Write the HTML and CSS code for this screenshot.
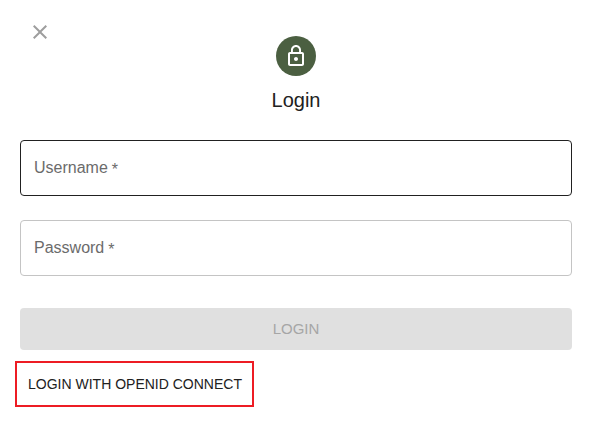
FILE: index.html
```html
<!DOCTYPE html>
<html lang="en">
<head>
<meta charset="utf-8">
<title>Login</title>
<link rel="stylesheet" href="styles.css">
</head>
<body>
<main class="dialog">
  <button class="close" aria-label="Close"><svg viewBox="0 0 24 24"><path d="M19 6.41 17.59 5 12 10.59 6.41 5 5 6.41 10.59 12 5 17.59 6.41 19 12 13.41 17.59 19 19 17.59 13.41 12z"/></svg></button>
  <header class="header">
    <div class="avatar"><svg viewBox="0 0 24 24"><path d="M12 17c1.1 0 2-.9 2-2s-.9-2-2-2-2 .9-2 2 .9 2 2 2zm6-9h-1V6c0-2.76-2.24-5-5-5S7 3.24 7 6v2H6c-1.1 0-2 .9-2 2v10c0 1.1.9 2 2 2h12c1.1 0 2-.9 2-2V10c0-1.1-.9-2-2-2zM8.900 6c0-1.710 1.390-3.100 3.100-3.100s3.100 1.390 3.100 3.100v2H8.900V6zM18 20H6V10h12v10z"/></svg></div>
    <h1 class="title">Login</h1>
  </header>
  <form class="form">
    <label class="field field-active"><span class="label">Username</span><span class="star">*</span></label>
    <label class="field"><span class="label">Password</span><span class="star">*</span></label>
    <button class="submit" type="button" disabled>LOGIN</button>
  </form>
  <button class="openid" type="button"><span class="openid-text">LOGIN WITH OPENID CONNECT</span></button>
</main>
</body>
</html>
```
FILE: styles.css
```css
* { box-sizing: border-box; }
body { margin: 0; background: #fff; font-family: "Liberation Sans", Arial, sans-serif; }
button { font-family: inherit; border: 0; padding: 0; background: none; }
.dialog { position: relative; height: 423px; padding: 36px 21px 0 20px; }
.close { position: absolute; left: 28px; top: 20px; width: 24px; height: 24px; }
.close svg { display: block; width: 24px; height: 24px; fill: #9e9e9e; }
.header { display: flex; flex-direction: column; align-items: center; }
.avatar { display: flex; align-items: center; justify-content: center; width: 40px; height: 40px; border-radius: 50%; background: #4b5f41; }
.avatar svg { width: 24px; height: 24px; fill: #fff; }
.title { margin: 8px 0 0; font-size: 20px; line-height: 32px; font-weight: 400; color: #212121; }
.form { display: flex; flex-direction: column; gap: 24px; margin-top: 24px; }
.field { display: flex; align-items: center; gap: 4px; height: 56px; padding: 0 13px; border: 1px solid #c4c4c4; border-radius: 4px; font-size: 16px; color: #6b6b6b; }
.star { padding-top: 4px; }
.field-active { border-color: #212121; }
.submit { height: 42px; margin-top: 8px; padding-bottom: 2px; border-radius: 4px; background: #e0e0e0; color: #a6a6a6; font-size: 15px; }
.openid { display: block; width: 239px; height: 46px; margin: 11px 0 0 -5px; padding-left: 1px; border: 2px solid #ed1c24; color: #212121; font-size: 14px; }
```
